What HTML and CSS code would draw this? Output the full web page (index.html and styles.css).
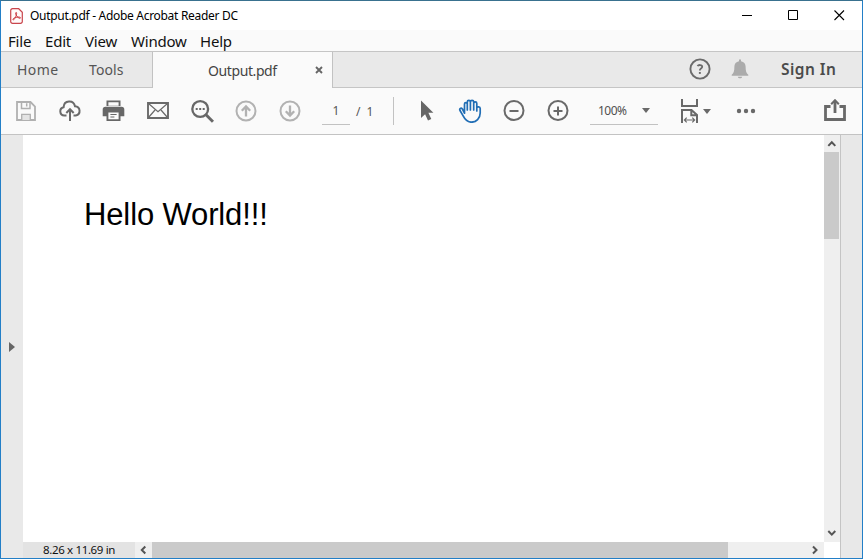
FILE: index.html
```html
<!DOCTYPE html>
<html lang="en">
<head>
<meta charset="utf-8">
<title>Output.pdf - Adobe Acrobat Reader DC</title>
<link rel="stylesheet" href="styles.css">
</head>
<body>
<div class="window">
  <header class="titlebar">
    <svg class="app-icon" width="13" height="16" viewBox="0 0 13 16"><path d="M2.5.7h6.2l3.6 3.5v9.300a1.800 1.800 0 0 1-1.800 1.800h-8A1.800 1.800 0 0 1 .7 13.500v-11A1.800 1.800 0 0 1 2.500.700Z" fill="#fffafa" stroke="#c9454c" stroke-width="1.200"/><path d="M6.200 4.500c-1.200 0-.3 2.500 1 4.100 1.400 1.700 3.400 2.200 3.300 1.200-.1-1.200-3.500-.8-5.200-.2-1.900.6-2.800 1.700-2.200 2.200.9.600 2.300-2.300 3-4.200.5-1.500.9-3.100.1-3.100Z" fill="none" stroke="#c9343c" stroke-width="1"/></svg>
    <span class="title">Output.pdf - Adobe Acrobat Reader DC</span>
    <div class="caption">
      <svg width="11" height="11"><path d="M0 5.500h10" stroke="#000"/></svg>
      <svg width="11" height="11"><path d="M.5.500h9v9h-9Z" fill="none" stroke="#000"/></svg>
      <svg width="11" height="11"><path d="m.5.500 9.500 9.500m0-9.500-9.500 9.500" fill="none" stroke="#000" stroke-width="1.100"/></svg>
    </div>
  </header>
  <nav class="menubar">
    <span class="m-file">File</span><span class="m-edit">Edit</span><span class="m-view">View</span><span class="m-window">Window</span><span class="m-help">Help</span>
  </nav>
  <div class="tabs">
    <div class="nav-tabs"><span class="home">Home</span><span class="tools">Tools</span></div>
    <div class="doc-tab"><span class="doc-name">Output.pdf</span><svg width="8" height="8" viewBox="0 0 8 8"><path d="m1 1 6 6m0-6L1 7" stroke="#666" stroke-width="1.900"/></svg></div>
    <div class="account">
      <svg class="help" width="22" height="22" viewBox="0 0 22 22" fill="none" stroke="#6b6b6b"><circle cx="11" cy="11" r="9.600" stroke-width="1.900"/><path d="M8.500 8.100c.8-1.500 4.700-1.600 4.700.7 0 1.800-2.400 1.700-2.400 3.600" stroke-width="1.800"/><path d="M9.900 14h1.900v1.900H9.900Z" fill="#6b6b6b" stroke="none"/></svg>
      <svg class="bell" width="18" height="20" viewBox="0 0 18 20" fill="#ababab"><path d="M8 .5h2v1.700c3 .5 4.600 2.700 4.600 5.300 0 4.500.7 6.700 2.700 8.200v1.100H.7v-1.100c2-1.500 2.700-3.700 2.700-8.200C3.400 4.900 5 2.700 8 2.200ZM6.800 17.700h4.400c-.4 2.200-4 2.200-4.400 0Z"/></svg>
      <span class="signin">Sign In</span>
    </div>
  </div>
  <div class="toolbar">
    <div class="cell"><svg width="24" height="24" viewBox="0 0 24 24" fill="none" stroke="#b0b0b0"><path d="M3 3h13.500L21 7.500V21H3Z" stroke-width="1.800"/><path d="M7.500 3v6.500H16V3M12.700 4.200v3.300" stroke-width="1.500"/><path d="M7.700 21v-5.700h8.600V21" fill="#e4e4e4" stroke-width="1.300"/></svg></div>
    <div class="cell"><svg width="24" height="24" viewBox="0 0 24 24" fill="none" stroke="#6a6a6a" stroke-width="2"><path d="M8.500 16.500H6.300A4.200 4.200 0 0 1 5.600 8.200C6 .9 15.600.5 17 7.200a4.700 4.700 0 0 1 .8 9.300H15.500M12 22V11M8.300 14 12 10.200l3.700 3.800"/></svg></div>
    <div class="cell"><svg width="24" height="24" viewBox="0 0 24 24"><path d="M4.500 1.500h14V7h-14ZM3.500 7.700h16a2.800 2.800 0 0 1 2.800 2.800v6.800h-3.800V22h-14v-4.700H.700v-6.800a2.800 2.800 0 0 1 2.800-2.800Z" fill="#676767"/><path d="M6.400 3.300h10.200v3.500H6.400ZM6.400 13.500h10.200v6.800H6.400Z" fill="#fafafa"/><path d="M8.400 15.500h6.200M8.400 18h4" stroke="#676767" stroke-width="1.200"/></svg></div>
    <div class="cell"><svg width="24" height="24" viewBox="0 0 24 24" fill="none" stroke="#6a6a6a"><path d="M2 4h20v15H2Z" stroke-width="1.900"/><path d="m2.500 4.500 9.500 8.200 9.500-8.200M2.500 18.500 9 11m12.500 7.500L15 11" stroke-width="1.200"/></svg></div>
    <div class="cell"><svg width="24" height="24" viewBox="0 0 24 24" fill="none" stroke="#686868"><circle cx="10.200" cy="10" r="7.900" stroke-width="2.300"/><path d="m16 15.800 7 7" stroke-width="3"/><path d="M5.700 10h2m1.500 0h2m1.500 0h2" stroke-width="2"/></svg></div>
    <div class="cell"><svg width="24" height="24" viewBox="0 0 24 24" fill="none" stroke="#b2b2b2" stroke-width="2"><circle cx="12" cy="12" r="9.500"/><path d="M12 17.500V7m-4.200 4.700L12 7.400l4.200 4.300" stroke-width="2.300"/></svg></div>
    <div class="cell"><svg width="24" height="24" viewBox="0 0 24 24" fill="none" stroke="#b2b2b2" stroke-width="2"><circle cx="12" cy="12" r="9.500"/><path d="M12 6.500V17m-4.200-4.700 4.200 4.300 4.200-4.300" stroke-width="2.300"/></svg></div>
    <div class="pages"><span class="page-field">1</span><span class="slash">/</span><span>1</span></div>
    <div class="cell"><svg width="24" height="24" viewBox="0 0 24 24"><path d="M7 1.500v17.600l4.100-3.900 2.900 6.300 3.300-1.500-2.900-6.200h5Z" fill="#666"/></svg></div>
    <div class="cell"><svg width="24" height="24" viewBox="0 0 24 24" fill="none" stroke="#216eb5" stroke-width="1.700" stroke-linecap="round" stroke-linejoin="round"><path d="M6.500 14.200V5.100c0-2 2.800-2 2.800 0M9.300 11V2.900c0-2 3.100-2 3.100 0M12.400 11V2.900c0-2 3.300-2 3.300 0V11M15.700 4.400c0-2 3.100-2 3.100 0V12M18.800 8.800c.3-1.400 3.400-1.400 3.400.8V14c0 5.500-4 9.200-8.700 9.200-5 0-7-3.500-8.500-6.500L2 11.500c-.9-1.900 1-3.100 2.400-1.500l2.100 4.200"/></svg></div>
    <div class="cell"><svg width="24" height="24" viewBox="0 0 24 24" fill="none" stroke="#696969" stroke-width="2"><circle cx="12" cy="11.500" r="9.500"/><path d="M7.500 12h9"/></svg></div>
    <div class="cell"><svg width="24" height="24" viewBox="0 0 24 24" fill="none" stroke="#696969" stroke-width="2"><circle cx="12" cy="11.500" r="9.500"/><path d="M7.500 12h9M12 7.500v9"/></svg></div>
    <div class="zoom"><span>100%</span><i class="caret"></i></div>
    <div class="fit"><svg width="19" height="26" viewBox="0 0 19 26" fill="none" stroke="#696969" stroke-width="2"><path d="M2 1v7h15V1M2 25V12h9.500l5.500 5v8M11.300 12v5.300H17"/><path d="M4.500 22h10M6.700 19.700 4.400 22l2.300 2.300m5.600-4.600 2.300 2.300-2.300 2.300" stroke-width="1.200"/></svg><i class="caret"></i></div>
    <div class="cell"><svg width="24" height="24" viewBox="0 0 24 24" fill="#696969"><circle cx="5" cy="12" r="2.200"/><circle cx="12" cy="12" r="2.200"/><circle cx="19" cy="12" r="2.200"/></svg></div>
    <div class="share"><svg width="24" height="24" viewBox="0 0 24 24" fill="none" stroke="#696969" stroke-width="2.800"><path d="M7.500 7.500H2.500V20.500h19V7.500h-5M12 14V3"/><path d="m8.200 5.200 3.800-4 3.800 4" stroke-width="2"/></svg></div>
  </div>
  <main class="workspace">
    <div class="left-rail"><i class="expander"></i></div>
    <div class="viewer">
      <div class="page"><p class="hello">Hello World!!!</p></div>
      <div class="vscroll">
        <svg class="arrow-up" width="16" height="17" viewBox="0 0 16 17"><path d="m4.300 10.900 3.500-3.600 3.500 3.600" fill="none" stroke="#555" stroke-width="2"/></svg>
        <div class="vthumb"></div>
        <svg class="arrow-down" width="16" height="17" viewBox="0 0 16 17"><path d="m4.300 6 3.500 3.600L11.300 6" fill="none" stroke="#555" stroke-width="2"/></svg>
      </div>
      <div class="hscroll">
        <span class="page-size"><span>8.26 x 11.69 in</span></span>
        <svg width="17" height="15" viewBox="0 0 17 15"><path d="M10.300 3.500 6.800 7l3.500 3.500" fill="none" stroke="#555" stroke-width="2"/></svg>
        <div class="hthumb"></div>
        <svg class="arrow-right" width="17" height="15" viewBox="0 0 17 15"><path d="m6 3.500 3.500 3.500L6 10.500" fill="none" stroke="#555" stroke-width="2"/></svg>
      </div>
      <div class="corner"></div>
    </div>
    <div class="right-rail"></div>
  </main>
</div>
</body>
</html>
```
FILE: styles.css
```css
* { box-sizing: border-box; }
body { margin: 0; font-family: "Noto Sans", "Open Sans", sans-serif; overflow: hidden; }
svg { display: block; flex: none; }
span { white-space: nowrap; }
.window { width: 863px; height: 559px; border: 1px solid #237fc7; border-top-color: #39718f; display: flex; flex-direction: column; background: #fafafa; }
.titlebar { height: 29px; flex: none; background: #fff; display: flex; align-items: center; padding: 0 17px 0 9px; }
.title { margin-left: 7px; font-size: 12px; letter-spacing: -0.3px; color: #000; }
.caption { margin-left: auto; display: flex; gap: 35px; }
.menubar { height: 21px; flex: none; display: flex; align-items: center; padding-left: 7px; font-size: 15px; color: #111; }
.m-file { width: 37px; }
.m-edit { width: 40px; }
.m-view { width: 46px; }
.m-window { width: 69px; }
.menubar span { letter-spacing: -0.2px; }
.tabs { height: 37px; flex: none; display: flex; border-top: 1px solid #c5c5c5; background: #e9e9e9; color: #555; font-size: 14px; }
.nav-tabs { width: 152px; border-right: 1px solid #c2c2c2; border-bottom: 1px solid #c5c5c5; display: flex; align-items: center; padding-left: 16px; }
.home { width: 72px; letter-spacing: 0.4px; }
.tools { letter-spacing: 0.1px; }
.doc-tab { width: 179px; background: #fafafa; display: flex; align-items: center; justify-content: space-between; padding: 0 9px 0 55px; }
.doc-name { color: #444; letter-spacing: -0.4px; }
.account { flex: 1; border-left: 1px solid #c2c2c2; border-bottom: 1px solid #c5c5c5; display: flex; align-items: center; }
.help { margin-left: 356px; margin-top: -2px; }
.bell { margin-left: 20px; margin-top: -1px; }
.signin { margin-left: 32px; margin-top: -2px; font-size: 15.500px; font-weight: 600; letter-spacing: 0.45px; color: #4b4b4b; }
.toolbar { height: 47px; flex: none; display: flex; align-items: center; padding-left: 3px; border-bottom: 1px solid #c3c3c3; }
.cell { width: 44px; display: flex; justify-content: center; }
.pages { width: 82px; height: 28px; padding-left: 10px; border-right: 1px solid #c2c2c2; margin-right: 10px; display: flex; align-items: center; font-size: 12px; color: #555; }
.page-field { width: 28px; height: 28px; line-height: 27px; text-align: center; border-bottom: 1px solid #c2c2c2; }
.slash { margin: 0 6px; }
.zoom { width: 68px; height: 28px; margin: 0 10px; padding: 0 8px; display: flex; align-items: center; justify-content: space-between; border-bottom: 1px solid #c2c2c2; font-size: 12px; color: #505050; }
.zoom span { letter-spacing: -0.5px; }
.caret { border: 4px solid transparent; border-top: 5px solid #696969; border-bottom: 0; }
.fit { width: 56px; padding-left: 12px; display: flex; align-items: center; gap: 4px; }
.share { margin-left: auto; margin-right: 15px; }
.workspace { flex: 1; min-height: 0; display: flex; }
.left-rail { width: 22px; background: #e9e9e9; display: flex; align-items: center; padding-left: 8px; }
.expander { border: 5px solid transparent; border-left: 6px solid #666; border-right: 0; }
.viewer { flex: 1; display: grid; grid-template: 1fr 16px / 1fr 16px; background: #fff; }
.page { padding: 62px 0 0 61px; }
.hello { margin: 0; font: 31px/35px "Liberation Sans", Arial, sans-serif; letter-spacing: -0.13px; color: #000; }
.vscroll { background: #efefef; display: flex; flex-direction: column; }
.vthumb { height: 87px; width: 15px; background: #cacaca; }
.arrow-down { margin-top: auto; }
.hscroll { background: #efefef; display: flex; align-items: center; }
.page-size { width: 112px; height: 16px; padding-left: 20px; line-height: 15px; background: #e3e3e3; font-size: 11.500px; letter-spacing: -0.35px; color: #111; }
.hthumb { height: 16px; width: 576px; background: #cacaca; }
.arrow-right { margin-left: auto; }
.right-rail { width: 22px; background: #e8e8e8; border-left: 1px solid #c4c4c4; }
```
